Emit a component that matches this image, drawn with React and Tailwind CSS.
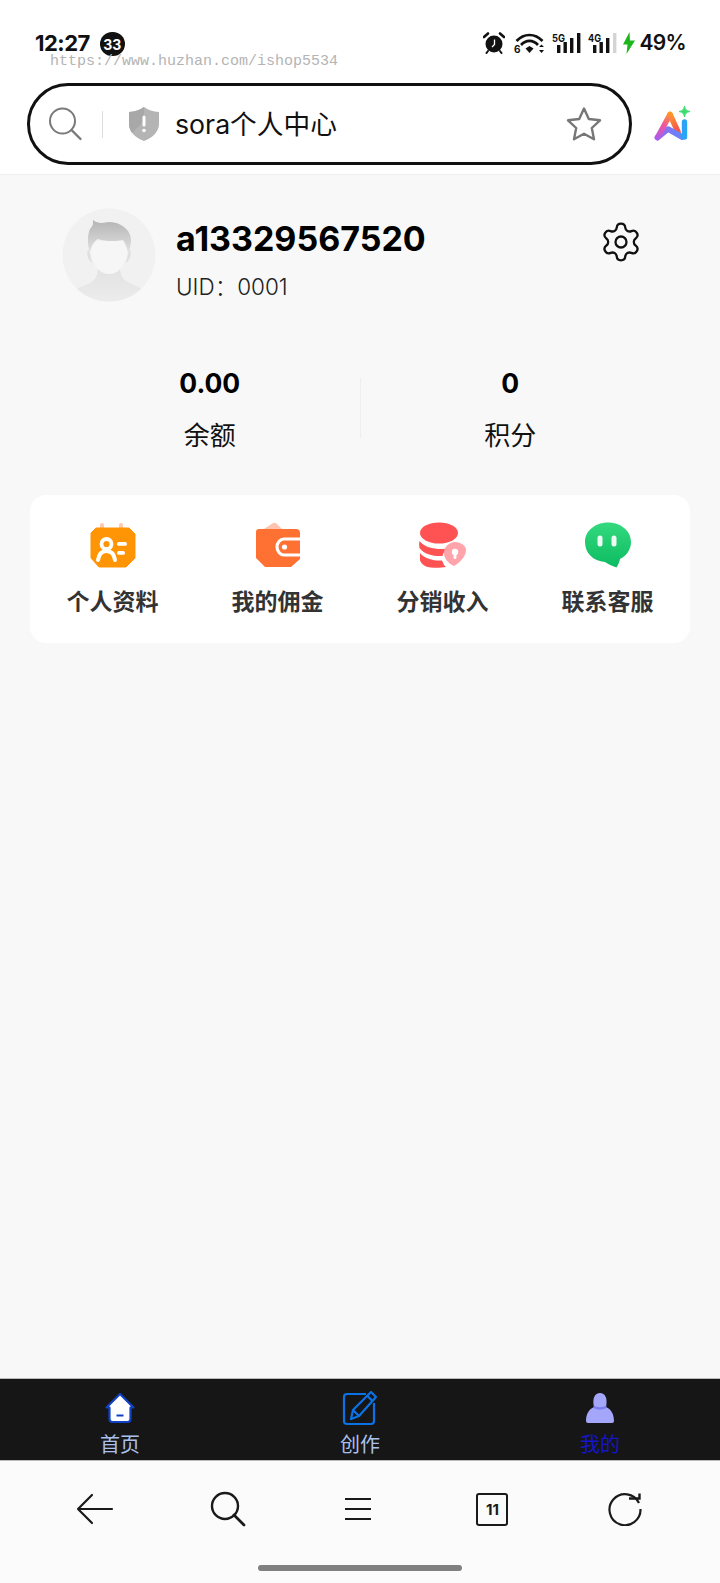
import React from "react";
import { Settings } from "lucide-react";

const cjk = '"Inter","Noto Sans CJK SC",sans-serif';
const cjkOnly = '"Noto Sans CJK SC",sans-serif';

function Alarm() {
  return (
    <svg width="22" height="22" viewBox="0 0 22 22">
      <circle cx="11" cy="12" r="8.5" fill="#111" />
      <path d="M1 5 L5 1.5 M21 5 L17 1.5" stroke="#111" strokeWidth="2.6" strokeLinecap="round" />
      <path d="M5 19 L3.5 21 M17 19 L18.5 21" stroke="#111" strokeWidth="2" strokeLinecap="round" />
      <path d="M11.5 7.5 V12.5 L9 15" stroke="#fff" strokeWidth="1.3" fill="none" />
    </svg>
  );
}
function Wifi() {
  return (
    <svg width="31" height="22" viewBox="0 0 31 22">
      <path d="M2.5 9 C10 1 21 1 28.5 9" stroke="#111" strokeWidth="2.7" fill="none" />
      <path d="M7 13 C12 7.5 19 7.5 24 13" stroke="#111" strokeWidth="2.7" fill="none" />
      <path d="M11.5 16.5 L15.5 14 L19.5 16.5 L15.5 21 Z" fill="#111" />
      <text x="0" y="20.5" fontSize="10" fontWeight="700" fill="#111" fontFamily="Inter, sans-serif">6</text>
      <path d="M25 15 L27.5 12.5 L30 15 Z M25 18 L30 18 L27.5 21 Z" fill="#111" />
    </svg>
  );
}
function Signal({ label, dim }) {
  return (
    <svg width="29" height="22" viewBox="0 0 29 22">
      <text x="0" y="9.5" fontSize="11" fontWeight="700" fill="#111" fontFamily="Inter, sans-serif" textLength="13" lengthAdjust="spacingAndGlyphs">{label}</text>
      <rect x="5" y="13" width="3.4" height="8" fill="#111" />
      <rect x="11.5" y="10" width="3.4" height="11" fill="#111" />
      <rect x="18" y="6" width="3.4" height="15" fill="#111" />
      <rect x="25" y="1" width="3.4" height="20" fill={dim ? "#d4d4d4" : "#111"} />
    </svg>
  );
}
function Bolt() {
  return (
    <svg width="12" height="22" viewBox="0 0 12 22">
      <path d="M6.5 0 L0 12.5 H4.5 L3.5 22 L12 8.5 H7 Z" fill="#1db71d" />
    </svg>
  );
}
function SearchGray() {
  return (
    <svg width="36" height="36" viewBox="0 0 36 36" fill="none">
      <circle cx="15.5" cy="15" r="12.5" stroke="#7a7a7a" strokeWidth="2" />
      <path d="M24.5 24 L33.5 33" stroke="#7a7a7a" strokeWidth="2.4" strokeLinecap="round" />
    </svg>
  );
}
function Shield() {
  return (
    <svg width="30" height="34" viewBox="0 0 30 34">
      <path d="M15 0 C19 3 24 4.5 30 5 V17 C30 25 23 31 15 34 C7 31 0 25 0 17 V5 C6 4.5 11 3 15 0 Z" fill="#b4b4b4" />
      <path d="M15 0 C11 3 6 4.5 0 5 V17 C0 20 1 23 3 26 L15 14 Z" fill="#a8a8a8" />
      <rect x="13.5" y="8.5" width="3" height="11" rx="1.5" fill="#fff" />
      <circle cx="15" cy="23.5" r="1.8" fill="#fff" />
    </svg>
  );
}
function Star() {
  return (
    <svg width="36" height="36" viewBox="0 0 36 36" fill="none">
      <path d="M18 2.5 L22.8 13 L34 14.3 L25.8 22 L28 33.3 L18 27.7 L8 33.3 L10.2 22 L2 14.3 L13.2 13 Z" stroke="#777" strokeWidth="2.4" strokeLinejoin="round" />
    </svg>
  );
}
function AiLogo() {
  return (
    <svg width="37" height="36" viewBox="0 0 37 36" fill="none">
      <defs>
        <linearGradient id="ai1" x1="14" y1="6" x2="3" y2="34" gradientUnits="userSpaceOnUse">
          <stop offset="0" stopColor="#ff9a1f" />
          <stop offset="0.45" stopColor="#f0569a" />
          <stop offset="1" stopColor="#a65cf5" />
        </linearGradient>
        <linearGradient id="ai2" x1="4" y1="32" x2="27" y2="24" gradientUnits="userSpaceOnUse">
          <stop offset="0" stopColor="#a65cf5" />
          <stop offset="1" stopColor="#5a8cf8" />
        </linearGradient>
        <linearGradient id="ai3" x1="14" y1="6" x2="24" y2="22" gradientUnits="userSpaceOnUse">
          <stop offset="0" stopColor="#ffae1f" />
          <stop offset="1" stopColor="#f5564f" />
        </linearGradient>
      </defs>
      <path d="M16 8.5 L24 26" stroke="url(#ai3)" strokeWidth="5.6" strokeLinecap="round" />
      <path d="M3.5 31.5 L14 23 L28 31" stroke="url(#ai2)" strokeWidth="5.6" strokeLinecap="round" strokeLinejoin="round" />
      <path d="M16 8.5 L3.5 31.5" stroke="url(#ai1)" strokeWidth="5.6" strokeLinecap="round" />
      <path d="M30.5 16 V31" stroke="#2aa5f5" strokeWidth="5.4" strokeLinecap="round" />
      <path d="M30.5 0 C31 3.5 32.5 5 36 5.5 C32.5 6 31 7.5 30.5 11 C30 7.5 28.5 6 25 5.5 C28.5 5 30 3.5 30.5 0 Z" fill="#3ddc6e" stroke="#3ddc6e" strokeWidth="1" />
    </svg>
  );
}
function Avatar() {
  return (
    <svg width="94" height="94" viewBox="0 0 94 94" className="shrink-0">
      <defs>
        <linearGradient id="hair" x1="0" y1="0" x2="0" y2="1">
          <stop offset="0" stopColor="#b4b4b4" />
          <stop offset="1" stopColor="#e2e2e2" />
        </linearGradient>
        <linearGradient id="bodyg" x1="0" y1="0" x2="0" y2="1">
          <stop offset="0" stopColor="#e2e2e2" />
          <stop offset="1" stopColor="#ececec" />
        </linearGradient>
        <clipPath id="ac"><circle cx="47" cy="47" r="46.5" /></clipPath>
      </defs>
      <circle cx="47" cy="47" r="46.5" fill="#f1f1f1" />
      <g clipPath="url(#ac)">
        <path d="M36 60 L58 60 C58 70 64 74 72 77 C78 79 82 82 84 84 V94 H10 V84 C14 81 18 79 24 77 C31 74 36 70 36 60 Z" fill="url(#bodyg)" />
        <path d="M27 42 C24 42 25 52 30 55 Z M67 42 C70 42 69 52 64 55 Z" fill="#dfdfdf" />
        <path d="M28 33 C28 55 36 66 47 66 C58 66 66 55 66 33 Z" fill="#f6f6f6" />
        <path d="M31 15 C31 19 28 19 27 24 C25 30 26 40 28 44 C30 37 32 33 36 31 C44 34 56 33 61 32 C63 35 65 39 66 45 C69 39 71 30 66 23 C62 18 56 14 47 14 C41 15 36 16 31 12 Z" fill="url(#hair)" />
      </g>
    </svg>
  );
}
function CalendarCard() {
  return (
    <svg width="46" height="46" viewBox="0 0 46 46">
      <rect x="10" y="1" width="4" height="8" rx="2" fill="#ffc9b0" />
      <rect x="29" y="1" width="4" height="8" rx="2" fill="#ffc9b0" />
      <path d="M6 6 H39 L45 12 V36 L36 45 H9 L1 36 V11 Z" fill="#ff9505" stroke="#ff9505" strokeLinejoin="round" strokeWidth="1" />
      <circle cx="16.5" cy="22" r="5" fill="none" stroke="#fff" strokeWidth="3.8" />
      <path d="M8 38 C9 32 12 29 16.5 29 C21 29 24 32 25 38" fill="none" stroke="#fff" strokeWidth="4" strokeLinecap="round" />
      <rect x="27" y="20" width="10" height="3.8" rx="1.9" fill="#fff" />
      <rect x="27" y="29" width="8" height="3.8" rx="1.9" fill="#fff" />
    </svg>
  );
}
function WalletCard() {
  return (
    <svg width="46" height="46" viewBox="0 0 46 46">
      <path d="M6 9 L18 1 Q20 0 22 2 L28 8 Z" fill="#ffc4ad" />
      <path d="M4 7 H41 Q45 7 45 11 V37 L36 45 H10 L1 36 V10 Q1 7 4 7 Z" fill="#ff7033" />
      <path d="M45 17 H29 C25 17 22 21 22 25 C22 29 25 33 29 33 H45" fill="none" stroke="#fff" strokeWidth="3.2" />
      <circle cx="29.5" cy="25" r="2.6" fill="#fff" />
    </svg>
  );
}
function DbCard() {
  return (
    <svg width="48" height="46" viewBox="0 0 48 46">
      <ellipse cx="20" cy="11" rx="19" ry="10.5" fill="#ff5252" />
      <path d="M0.5 19 C5 25 14 27 22 27 C25 27 27 26.5 29 26 C26 28 24 31 23.5 34 C15 34.5 5 32.5 0.5 26 C0 23 0 21 0.5 19 Z" fill="#ff5252" />
      <path d="M1 31 C6 37 15 39 23 38.5 C24 41 25 43.5 27 45 C23 45.5 18 46 12 45.5 C6 45 2 42 1 38 Z" fill="#ff5252" />
      <path d="M36 20 C42 20 47 24 47 28 C47 35 40 41 35 44 C30 42 25 37 25 31 C25 25 30 20 36 20 Z" fill="#ffa4aa" />
      <circle cx="36" cy="30" r="3.2" fill="#fff" />
      <rect x="34.6" y="30" width="2.8" height="7" rx="1.2" fill="#fff" />
    </svg>
  );
}
function ChatCard() {
  return (
    <svg width="48" height="46" viewBox="0 0 48 46">
      <defs>
        <linearGradient id="chat" x1="0" y1="0" x2="0" y2="1">
          <stop offset="0" stopColor="#33d97f" />
          <stop offset="1" stopColor="#0dbb60" />
        </linearGradient>
      </defs>
      <path d="M24 0.5 C37 0.5 47 9 47 20 C47 28 42 34 36 37 C35.5 40 34 43 32.5 45.5 C28 44 24 42 21 40 C9 39 1 31 1 20 C1 9 11 0.5 24 0.5 Z" fill="url(#chat)" />
      <rect x="13.5" y="13.5" width="5" height="11" rx="2.5" fill="#fff" fillOpacity="0.92" />
      <rect x="27.5" y="13.5" width="5" height="11" rx="2.5" fill="#fff" fillOpacity="0.92" />
    </svg>
  );
}
function HomeTab() {
  return (
    <svg width="32" height="32" viewBox="0 0 32 32">
      <path d="M16 2 L29.5 15.5 H26.5 V27 Q26.5 30 23.5 30 H8.5 Q5.5 30 5.5 27 V15.5 H2.5 Z" fill="#fff" stroke="#1242c4" strokeWidth="2.2" strokeLinejoin="round" />
      <rect x="12.5" y="22.5" width="7" height="2" fill="#1242c4" />
    </svg>
  );
}
function EditTab() {
  return (
    <svg width="36" height="36" viewBox="0 0 36 36" fill="none">
      <path d="M24 4 H5 Q2 4 2 7 V31 Q2 34 5 34 H29 Q32 34 32 31 V13" stroke="#0b72e6" strokeWidth="2.2" />
      <path d="M29 2 L34 7 L17 26 L9 29 L11 20 Z M25.5 6 L30.5 11 M11 20 L17 26" stroke="#0b72e6" strokeWidth="2.2" strokeLinejoin="round" fill="#161616" />
    </svg>
  );
}
function UserTab() {
  return (
    <svg width="30" height="30" viewBox="0 0 30 30">
      <path d="M1 28 C1 21 4 16 9 14 C7 5 10 0 15 0 C20 0 23 5 21 14 C26 16 29 21 29 28 Q29 30 27 30 H3 Q1 30 1 28 Z" fill="#a4a6fa" />
      <path d="M8.5 12 C11 15 19 15 21.5 12 L21 15 C18 17 12 17 9 15 Z" fill="#7b7df2" />
    </svg>
  );
}
function NavBack() {
  return (
    <svg width="38" height="32" viewBox="0 0 38 32" fill="none" stroke="#1a1a1a" strokeWidth="2.2" strokeLinecap="round" strokeLinejoin="round">
      <path d="M16 2 L2 16 L16 30 M2 16 H36" />
    </svg>
  );
}
function NavSearch() {
  return (
    <svg width="36" height="36" viewBox="0 0 36 36" fill="none" stroke="#1a1a1a" strokeLinecap="round">
      <circle cx="15" cy="15" r="13" strokeWidth="2.4" />
      <path d="M24 24 L34 34" strokeWidth="2.8" />
    </svg>
  );
}
function NavMenu() {
  return (
    <svg width="26" height="24" viewBox="0 0 26 24" stroke="#1a1a1a" strokeWidth="2.2">
      <path d="M0 2 H26 M0 12 H26 M0 22 H26" />
    </svg>
  );
}
function NavReload() {
  return (
    <svg width="34" height="34" viewBox="0 0 34 34" fill="none" stroke="#1a1a1a" strokeWidth="2.2">
      <path d="M31 11 A15.5 15.5 0 1 0 32.5 17" />
      <path d="M21 5 H31.5 V0" strokeWidth="2.4" transform="translate(0 1.5)" />
    </svg>
  );
}

const shortcuts = [
  { label: "个人资料", Icon: CalendarCard },
  { label: "我的佣金", Icon: WalletCard },
  { label: "分销收入", Icon: DbCard },
  { label: "联系客服", Icon: ChatCard },
];

export default function App() {
  return (
    <div className="relative flex h-[1583px] w-full flex-col overflow-hidden bg-[#f8f8f8]" style={{ fontFamily: cjk }}>
      {/* header */}
      <header className="h-[175px] shrink-0 border-b border-[#eeeeee] bg-white">
        <div className="mt-[32px] flex h-[22px] items-center justify-between pl-[35px] pr-[34px]">
          <div className="flex items-center">
            <span className="text-[22px] font-bold tracking-[-0.5px] text-[#111]">12:27</span>
            <span className="ml-[10px] mt-[2px] flex h-[24px] w-[25px] items-center justify-center rounded-full bg-[#111] text-[14px] font-bold text-white">33</span>
          </div>
          <div className="flex items-center">
            <Alarm />
            <span className="ml-[9px]"><Wifi /></span>
            <span className="ml-[7px]"><Signal label="5G" /></span>
            <span className="ml-[7px]"><Signal label="4G" dim /></span>
            <span className="ml-[6px]"><Bolt /></span>
            <span className="ml-[5px] text-[21px] font-semibold tracking-[-0.7px] text-[#111]">49%</span>
          </div>
        </div>
        <div className="absolute left-[50px] top-[53px] text-[15px] leading-[17px] text-[#b4b4b4]" style={{ fontFamily: '"Liberation Mono", monospace' }}>
          https://www.huzhan.com/ishop5534
        </div>
        <div className="mt-[29px] flex items-center pl-[27px]">
          <div className="flex h-[82px] w-[605px] items-center rounded-full border-[3px] border-[#111] bg-white pl-[17px] pr-[27px]">
            <SearchGray />
            <span className="ml-[19px] h-[27px] w-px bg-[#dddddd]" />
            <span className="ml-[26px]"><Shield /></span>
            <span className="ml-[16px] mt-[1px] text-[26.7px] leading-none text-[#111]" style={{ fontFamily: cjk }}>sora个人中心</span>
            <span className="ml-auto"><Star /></span>
          </div>
          <span className="ml-[22px]"><AiLogo /></span>
        </div>
      </header>

      {/* profile */}
      <main className="flex min-h-0 flex-1 flex-col">
        <section className="mt-[33px] flex items-start pl-[62px] pr-[77px]">
          <Avatar />
          <div className="ml-[20px] flex flex-col">
            <span className="mt-[12px] text-[34px] font-bold leading-[38px] text-black">a13329567520</span>
            <span className="mt-[15px] text-[22.5px] font-light leading-[28px] text-[#222]">UID：0001</span>
          </div>
          <Settings className="ml-auto mt-[12px]" size={44} strokeWidth={1.25} color="#111" />
        </section>

        <section className="mt-[67px] grid grid-cols-[1fr_1px_1fr] px-[60px]">
          <div className="flex flex-col items-center">
            <span className="text-[26.5px] font-bold leading-[28px] text-black">0.00</span>
            <span className="mt-[21px] text-[26px] leading-[32px] text-[#111]" style={{ fontFamily: cjkOnly }}>余额</span>
          </div>
          <span className="mt-[9px] h-[60px] bg-[#eeeeee]" />
          <div className="flex flex-col items-center">
            <span className="text-[26.5px] font-bold leading-[28px] text-black">0</span>
            <span className="mt-[21px] text-[26px] leading-[32px] text-[#111]" style={{ fontFamily: cjkOnly }}>积分</span>
          </div>
        </section>

        <section className="mx-[30px] mt-[45px] grid h-[148px] grid-cols-4 rounded-[16px] bg-white">
          {shortcuts.map(({ label, Icon }) => (
            <div key={label} className="flex flex-col items-center pt-[27px]">
              <span className="flex h-[46px] items-center justify-center"><Icon /></span>
              <span className="mt-[16px] text-[23px] font-bold leading-[32px] text-[#333]" style={{ fontFamily: cjkOnly }}>{label}</span>
            </div>
          ))}
        </section>
      </main>

      {/* site tab bar */}
      <nav className="grid h-[83px] shrink-0 grid-cols-3 border-y border-[#bbbbbb] bg-[#161616]">
        <div className="flex flex-col items-center pt-[11px]">
          <span className="flex h-[36px] items-center"><HomeTab /></span>
          <span className="mt-[4px] text-[20px] leading-[28px] text-[#a9c1ec]" style={{ fontFamily: cjkOnly }}>首页</span>
        </div>
        <div className="flex flex-col items-center pt-[11px]">
          <span className="flex h-[36px] items-center"><EditTab /></span>
          <span className="mt-[4px] text-[20px] leading-[28px] text-[#a9c1ec]" style={{ fontFamily: cjkOnly }}>创作</span>
        </div>
        <div className="flex flex-col items-center pt-[11px]">
          <span className="flex h-[36px] items-center"><UserTab /></span>
          <span className="mt-[4px] text-[20px] leading-[28px] text-[#1515c9]" style={{ fontFamily: cjkOnly }}>我的</span>
        </div>
      </nav>

      {/* browser bar */}
      <footer className="flex h-[122px] shrink-0 flex-col items-center bg-[#fbfbfb]">
        <div className="mt-[30px] grid h-[36px] w-full grid-cols-5 items-center justify-items-center px-[29px]">
          <NavBack />
          <NavSearch />
          <span className="mr-[3px]"><NavMenu /></span>
          <span className="flex h-[33px] w-[32px] items-center justify-center rounded-[3px] border-[2px] border-[#1a1a1a] text-[15px] font-bold leading-none text-[#1a1a1a]">11</span>
          <NavReload />
        </div>
        <span className="mt-[38px] h-[6px] w-[204px] rounded-full bg-[#808080]" />
      </footer>
    </div>
  );
}
